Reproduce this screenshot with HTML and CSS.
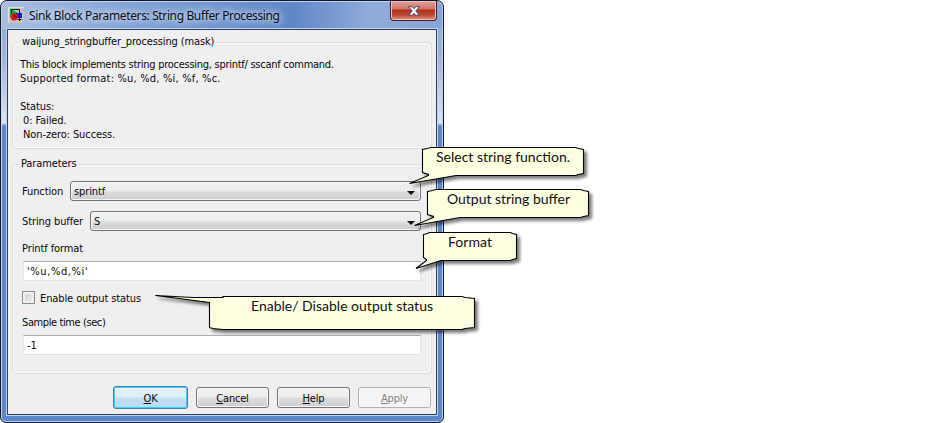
FILE: index.html
```html
<!DOCTYPE html>
<html lang="en">
<head>
<meta charset="utf-8">
<title>Sink Block Parameters</title>
<link rel="stylesheet" href="styles.css">
</head>
<body>
<main class="window">
  <header class="titlebar">
    <svg class="app-icon" width="16" height="16" viewBox="0 0 16 16">
      <rect width="16" height="16" fill="#c4c0bc"/>
      <path d="M.5 15.500V.5h15" fill="none" stroke="#e6e1dc"/>
      <path d="M2 1.500v9l8-4.500z" fill="#12a344"/>
      <rect x="8" y="6" width="6" height="5" fill="#0a1df0"/>
      <path d="M3.500 6V2.500h8V12" fill="none" stroke="#111"/>
      <circle cx="6.200" cy="9.800" r="3.600" fill="#f20d12"/>
      <path d="M6.500 7.500v2.500h2.500M11.500 10v4M9.500 12.500h4" stroke="#111" fill="none"/>
    </svg>
    <h1 class="title">Sink Block Parameters: String Buffer Processing</h1>
    <button class="close" aria-label="Close">
      <svg width="12" height="10" viewBox="0 0 12 10">
        <path d="M.7.7h3.400L6 2.700 7.900.7h3.400L7.800 5l3.500 4.300H7.900L6 7.300 4.100 9.300H.7L4.200 5z" fill="#fff" stroke="#4c4c5f" stroke-width="1"/>
      </svg>
    </button>
  </header>
  <section class="content">
    <fieldset class="group about">
      <legend><span class="t-mask">waijung_stringbuffer_processing (mask)</span></legend>
      <p class="t-desc">This block implements string processing, sprintf/ sscanf command.</p>
      <p class="t-fmt">Supported format: %u, %d, %i, %f, %c.</p>
      <p>&nbsp;</p>
      <p>Status:</p>
      <p class="indent">0: Failed.</p>
      <p class="indent">Non-zero: Success.</p>
    </fieldset>
    <fieldset class="group params">
      <legend>Parameters</legend>
      <div class="row"><span class="label fn">Function</span><div class="select"><span>sprintf</span><i class="arrow"></i></div></div>
      <div class="row second"><span class="label sb">String buffer</span><div class="select"><span>S</span><i class="arrow"></i></div></div>
      <div class="caption">Printf format</div>
      <div class="input format">'%u,%d,%i'</div>
      <div class="check"><i class="box"></i><span>Enable output status</span></div>
      <div class="caption sample">Sample time (sec)</div>
      <div class="input">-1</div>
    </fieldset>
    <footer class="buttons">
      <button class="btn ok"><u>O</u>K</button>
      <button class="btn"><u>C</u>ancel</button>
      <button class="btn"><u>H</u>elp</button>
      <button class="btn disabled"><u>A</u>pply</button>
    </footer>
  </section>
</main>
<svg class="callouts" width="950" height="423" viewBox="0 0 950 423">
  <g class="bubbles">
    <path d="M422.500 149.500l5-1 3-1h145l3 1 5 1v24l-5 1-3 1H456L409.500 183.500 428.500 175.500v-1l-6-2z"/>
    <path d="M427.500 191.500l5-1 3-1h145l3 1 5 1v24l-5 1-3 1H460L414.500 225.500 433.500 217.500v-1l-6-2z"/>
    <path d="M423.500 234.500l4-1 2-1h81l2 1 4 1v24l-4 1-2 1H441L416 268.500 426.500 260.500v-1l-3-2z"/>
    <path d="M155.500 295.500L193 297.500h30v-1h239l3 1 9.500 1v29l-9.500 1-3 1H223l-10-1-3.500-1V302.500z"/>
  </g>
  <g class="notes">
    <text x="436" y="162" textLength="134">Select string function.</text>
    <text x="447" y="204" textLength="123">Output string buffer</text>
    <text x="448" y="247" textLength="44">Format</text>
    <text x="251" y="311" textLength="182">Enable/ Disable output status</text>
  </g>
</svg>
</body>
</html>
```
FILE: styles.css
```css
* { box-sizing: border-box; }
body {
  margin: 0;
  width: 950px;
  height: 423px;
  overflow: hidden;
  position: relative;
  background: #fff;
  color: #08080e;
  font: 11px/14px "DejaVu Sans Condensed", "DejaVu Sans", sans-serif;
  letter-spacing: -.1px;
}
.window {
  width: 444px;
  height: 423px;
  padding: 0 5px 5px;
  border: 1px solid #10182b;
  border-radius: 7px 7px 6px 6px;
  background:
    linear-gradient(90deg, #a9bfe0 0, #8eabd9 90px, #7c9dd3 160px, #6f93cd 230px, #5f87c6 290px, #7d9dd2 340px, #91acd9 370px, #86a4d5) 0 0 / 100% 28px no-repeat,
    linear-gradient(#87a3cf 0, #a3b8dc 60px, #dbe4f2 122px, #5f88cb 125px, #5b86ca);
  box-shadow: inset 0 0 0 1px #c2d2ec;
}
.titlebar {
  height: 27px;
  display: flex;
  align-items: flex-start;
  padding: 0 1px 0 2px;
}
.app-icon { margin-top: 6px; flex: none; }
.title {
  margin: 6px 0 0 5px;
  font: 12px/17px "Noto Sans", sans-serif;
  color: #0b0d14;
  white-space: nowrap;
  text-shadow: 0 0 7px #dce7f8, 0 0 7px #dce7f8;
  letter-spacing: -.37px;
}
.close {
  margin: 0 0 0 auto;
  width: 47px;
  height: 20px;
  padding: 0;
  border: 1px solid #4a1c2c;
  border-top: 0;
  border-radius: 0 0 4px 4px;
  background: linear-gradient(#dfa398, #cf7469 8px, #b22f20 9px, #bd4a30 14px, #dc9580);
  box-shadow: inset 0 0 0 1px #f0c2ba;
  display: flex;
  justify-content: center;
  align-items: center;
}
.content {
  height: 388px;
  border: 1px solid #c2d4ea;
  outline: 1px solid #2c3f60;
  outline-offset: -2px;
  background: #efefef;
  padding: 6px 5px 0;
}
.group {
  margin: 0;
  min-width: 0;
  border: 1px solid #d5dfe5;
  border-radius: 3px;
  box-shadow: inset 0 0 0 1px #fafafa;
  padding: 0 7px;
}
.group legend {
  padding: 0 2px;
  height: 14px;
  background: #efefef;
}
.group p { margin: 0; white-space: pre; }
.about { height: 114px; padding-top: 9px; }
.t-mask { letter-spacing: -.13px; }
.group .t-desc { letter-spacing: -.27px; }
.group .t-fmt { letter-spacing: .19px; }
.indent { padding-left: 3px; }
.params { height: 217px; margin-top: 8px; padding: 10px 10px 0 9px; }
.params legend { margin-left: -3px; }
.row { display: flex; height: 20px; align-items: center; }
.row.second { margin-top: 10px; }
.label { flex: none; white-space: nowrap; padding-top: 2px; }
.fn { width: 48px; }
.sb { width: 68px; }
.select {
  flex: 1;
  height: 20px;
  border: 1px solid #737373;
  border-radius: 3px;
  background: linear-gradient(#f3f3f3, #ebebeb 9px, #dcdcdc 10px, #cecece);
  box-shadow: inset 0 0 0 1px #f6f6f6;
  display: flex;
  justify-content: space-between;
  align-items: center;
  padding: 0 5px 0 3px;
}
.select span { padding-top: 2px; }
.arrow { border: 4px solid transparent; border-top-color: #111; border-bottom: 0; margin-top: 3px; }
.caption { height: 14px; margin: 11px 0 5px; }
.sample { letter-spacing: -.4px; }
.input {
  height: 20px;
  margin-left: 1px;
  padding: 3px 3px 0;
  background: #fff;
  border: 1px solid #e0e4ec;
  border-top-color: #abadb3;
}
.format { letter-spacing: .6px; }
.check { display: flex; gap: 5px; align-items: flex-start; margin-top: 10px; height: 14px; }
.check span { padding-top: 1px; }
.box {
  width: 13px;
  height: 13px;
  border: 1px solid #8a8b8d;
  background: linear-gradient(135deg, #c6cbd2, #f4f4f4);
  box-shadow: inset 0 0 0 2px #f1f1f1;
}
.buttons { display: flex; justify-content: flex-end; align-items: center; gap: 8px; margin-top: 12px; padding-right: 1px; height: 23px; }
.btn {
  width: 73px;
  height: 21px;
  padding: 2px 0 0;
  font: inherit;
  letter-spacing: -.2px;
  color: inherit;
  border: 1px solid #737373;
  border-radius: 3px;
  background: linear-gradient(#f3f3f3, #ebebeb 9px, #dcdcdc 10px, #cecece);
  box-shadow: inset 0 0 0 1px #f8f8f8;
}
.btn.ok {
  width: 75px;
  height: 23px;
  border-color: #3c7fb1;
  background: linear-gradient(#e7f3fa, #dcedf7 10px, #c3e0f2 11px, #b6dbf1);
  box-shadow: inset 0 0 0 1px #3fd0f8;
}
.btn.disabled { color: #838383; border-color: #adb2b5; background: #f4f4f4; }
.callouts { position: absolute; left: 0; top: 0; }
.bubbles { fill: #ffffe1; stroke: #000; stroke-width: 1.1; filter: drop-shadow(3px 3px 1.5px rgba(0, 0, 0, .5)); }
.notes { font: 14px Lato, sans-serif; fill: #101018; letter-spacing: 0; }
```
